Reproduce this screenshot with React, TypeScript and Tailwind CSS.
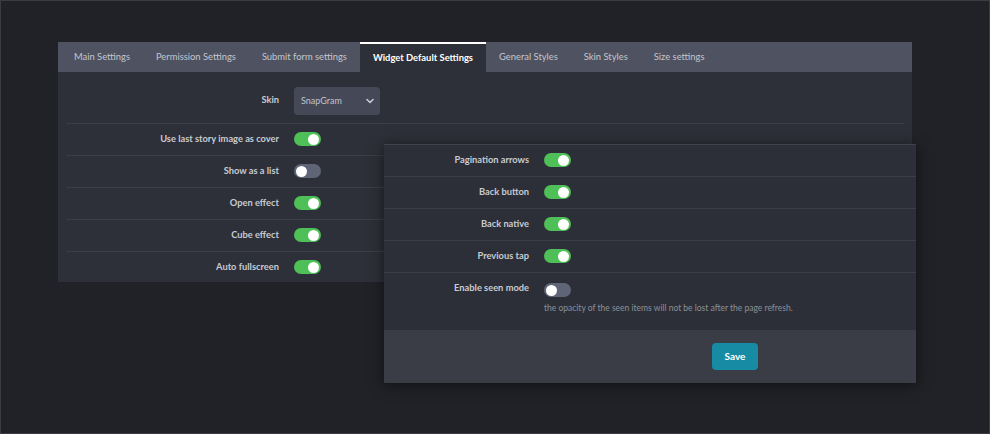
import React from 'react'

const tabs = [
  'Main Settings',
  'Permission Settings',
  'Submit form settings',
  'Widget Default Settings',
  'General Styles',
  'Skin Styles',
  'Size settings',
]

const Toggle: React.FC<{ on?: boolean }> = ({ on }) => (
  <div
    className={`w-[27px] h-[14px] rounded-full flex items-center px-[2px] ${
      on ? 'bg-[#4fbf58] justify-end' : 'bg-[#5f6577] justify-start'
    }`}
  >
    <div className="w-[11px] h-[11px] rounded-full bg-white" />
  </div>
)

const Row: React.FC<{ label: string; on?: boolean; labelW: string; last?: boolean }> = ({
  label,
  on,
  labelW,
  last,
}) => (
  <div className={`flex items-start pt-[8px] ${last ? 'h-[30px]' : 'h-[32px] border-b border-[#3b3e47]'}`}>
    <div className={`${labelW} text-right pr-[15px] text-[9.3px] font-bold text-[#c8cbd2] leading-[14px]`}>
      {label}
    </div>
    <Toggle on={on} />
  </div>
)

export default function App() {
  return (
    <div
      className="relative h-[434px] w-full bg-[#202227] border border-[#3a3c41] pt-[41px] pl-[57px]"
      style={{ fontFamily: 'Lato, "Open Sans", sans-serif' }}
    >
      {/* Main settings panel */}
      <div className="w-[854px] bg-[#2d3038]">
        <div className="flex h-[30px] bg-[#4e5261] pl-[3px]">
          {tabs.map((t) => {
            const active = t === 'Widget Default Settings'
            return (
              <div
                key={t}
                className={`px-[13px] flex items-center pt-[1px] text-[9.4px] ${
                  active
                    ? 'bg-[#2d3038] text-white font-bold border-t-2 border-white'
                    : 'text-[#c3c6ce]'
                }`}
              >
                {t}
              </div>
            )
          })}
        </div>

        <div className="mx-2">
          <div className="flex items-start h-[52px] pt-[15px] border-b border-[#3b3e47]">
            <div className="w-[228px] text-right pr-[15px] pt-[6px] text-[9.3px] font-bold text-[#c8cbd2] leading-[14px]">
              Skin
            </div>
            <div className="w-[86px] h-[28px] rounded-sm bg-[#454957] flex items-center justify-between pl-[7px] pr-[6px]">
              <span className="text-[9px] text-[#c0c4cc]">SnapGram</span>
              <svg width="8" height="6" viewBox="0 0 8 6" fill="none">
                <path d="M1 1.5 L4 4.5 L7 1.5" stroke="#c7cad1" strokeWidth="1.6" strokeLinecap="round" strokeLinejoin="round" />
              </svg>
            </div>
          </div>
          <Row label="Use last story image as cover" on labelW="w-[228px]" />
          <Row label="Show as a list" labelW="w-[228px]" />
          <Row label="Open effect" on labelW="w-[228px]" />
          <Row label="Cube effect" on labelW="w-[228px]" />
          <Row label="Auto fullscreen" on labelW="w-[228px]" last />
        </div>
      </div>

      {/* Floating widget options card */}
      <div className="absolute left-[383px] top-[143px] w-[532px] bg-[#2c2f37] border-t border-[#40434c] shadow-[0_2px_14px_rgba(0,0,0,0.55)]">
        <Row label="Pagination arrows" on labelW="w-[160px]" />
        <Row label="Back button" on labelW="w-[160px]" />
        <Row label="Back native" on labelW="w-[160px]" />
        <Row label="Previous tap" on labelW="w-[160px]" />
        <div className="flex items-start h-[57px] pt-[8px]">
          <div className="w-[160px] text-right pr-[15px] text-[9.3px] font-bold text-[#c8cbd2] leading-[14px]">
            Enable seen mode
          </div>
          <div className="flex flex-col gap-[5px] pt-[2px]">
            <Toggle />
            <div className="text-[8.5px] text-[#8b909a]">
              the opacity of the seen items will not be lost after the page refresh.
            </div>
          </div>
        </div>
        <div className="h-[53px] bg-[#3a3d46] flex items-center pl-[328px]">
          <button className="w-[46px] h-[27px] rounded-sm bg-[#178aa4] text-white text-[10px] font-bold">Save</button>
        </div>
      </div>
    </div>
  )
}
